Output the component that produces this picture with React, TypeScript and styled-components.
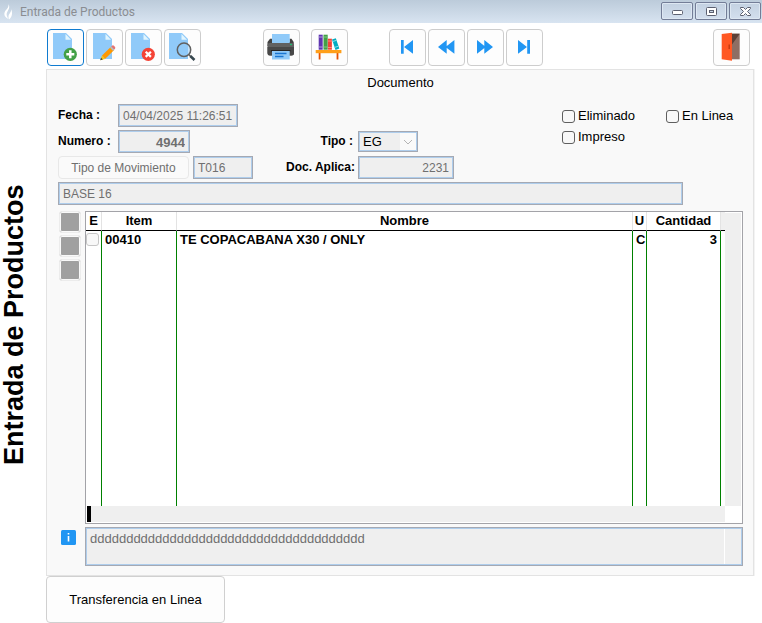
import React from "react";
import styled, { createGlobalStyle, css } from "styled-components";

const Global = createGlobalStyle`
  * { box-sizing: border-box; }
  body {
    margin: 0;
    background: #fff;
    color: #000;
    font: 13px/16px "Liberation Sans", Arial, sans-serif;
  }
  button, input, select, textarea { font: inherit; margin: 0; }
`;

const Window = styled.div`
  display: flex;
  flex-direction: column;
  min-height: 100vh;
`;

const TitleBar = styled.header`
  display: flex;
  align-items: center;
  height: 23px;
  padding: 0 1px 0 4px;
  background: linear-gradient(#bccbda, #d8e4f1);
`;

const WindowTitle = styled.span`
  flex: 1;
  margin-left: 6px;
  padding-top: 1px;
  color: #8a8d92;
  font: 12px/16px Roboto, "Open Sans", sans-serif;
`;

const WindowButton = styled.button`
  display: flex;
  align-items: center;
  justify-content: center;
  width: 32px;
  height: 18px;
  margin: 0 0 1px 2px;
  padding: 0;
  border: 1px solid #737d97;
  border-radius: 2px;
  background: linear-gradient(#c3d1e1, #d3dfee);
  box-shadow: inset 0 0 0 1px #dde7f2;
`;

const Body = styled.main`
  flex: 1;
  display: grid;
  grid-template-columns: 46px minmax(0, 1fr);
  padding-right: 8px;
`;

const SideTitle = styled.h1`
  margin: 0;
  padding-left: 18px;
  padding-bottom: 4px;
  writing-mode: vertical-rl;
  transform: rotate(180deg);
  text-align: center;
  font-size: 27px;
  line-height: 28px;
`;

const Content = styled.div`
  display: flex;
  flex-direction: column;
`;

const Toolbar = styled.div`
  display: flex;
  padding: 6px 4px 3px 1px;
`;

const ToolGroup = styled.div<{ $before?: string }>`
  display: flex;
  gap: 2px;
  margin-left: ${(p) => p.$before ?? "0"};
`;

const ToolButton = styled.button<{ $active?: boolean }>`
  display: grid;
  place-items: center;
  width: 37px;
  height: 37px;
  padding: 0;
  border: 1px solid ${(p) => (p.$active ? "#0f7bd0" : "#cdcdcd")};
  border-radius: 4px;
  background: #fdfdfd;
  svg { margin: -1px; }
`;

const Panel = styled.section`
  flex: 1;
  display: flex;
  flex-direction: column;
  padding: 5px 10px 9px 11px;
  border: 1px solid #e3e3e3;
  background: #f9f9f9;
  box-shadow: 1px 0 0 #f3f3f3;
`;

const PanelTitle = styled.h2`
  margin: 0;
  text-align: center;
  font-size: 13px;
  font-weight: 400;
  line-height: 16px;
`;

const TopArea = styled.div`
  display: flex;
  justify-content: space-between;
  padding-top: 13px;
`;

const Fields = styled.div`
  display: flex;
  flex-direction: column;
  gap: 3px;
`;

const FieldRow = styled.div`
  display: flex;
  align-items: center;
  height: 23px;
`;

const FieldPart = styled.div`
  display: flex;
  align-items: center;
  width: 228px;
`;

const Label = styled.label<{ $end?: boolean }>`
  width: ${(p) => (p.$end ? "67px" : "60px")};
  margin-right: ${(p) => (p.$end ? "5px" : "0")};
  padding-bottom: 2px;
  text-align: ${(p) => (p.$end ? "right" : "left")};
  font-size: 12px;
  font-weight: 700;
  white-space: nowrap;
`;

const boxed = css`
  border: 1px solid #a5a9b3;
  border-radius: 0;
  background-color: #efefef;
  box-shadow: inset 0 0 0 1px #aecdec;
  outline: none;
`;

const TextField = styled.input<{ $width: string; $end?: boolean; $bold?: boolean }>`
  ${boxed}
  width: ${(p) => p.$width};
  height: 23px;
  padding: ${(p) => (p.$bold ? "2px" : "0")} 4px 0;
  color: #6f6f6f;
  font-size: ${(p) => (p.$bold ? "13px" : "12px")};
  font-weight: ${(p) => (p.$bold ? 700 : 400)};
  text-align: ${(p) => (p.$end ? "right" : "left")};
`;

const SelectBox = styled.span`
  ${boxed}
  display: grid;
  grid-template-columns: minmax(0, 1fr) 16px;
  align-items: center;
  width: 60px;
  height: 21px;
  padding: 1px;
  svg { grid-area: 1 / 2; background: #fafafa; pointer-events: none; }
`;

const Select = styled.select`
  grid-area: 1 / 1 / 2 / 3;
  appearance: none;
  border: 0;
  padding: 0 3px;
  background: transparent;
  color: #000;
  outline: none;
`;

const TypeButton = styled.button`
  width: 131px;
  height: 23px;
  margin-right: 4px;
  padding: 0;
  border: 1px solid #e8e8e8;
  border-radius: 4px;
  background: #fafafa;
  color: #6f6f6f;
  font-size: 12px;
`;

const Checks = styled.div`
  display: grid;
  grid-template-columns: 104px auto;
  align-content: start;
  gap: 5px 0;
  width: 181px;
  padding-top: 4px;
`;

const CheckLabel = styled.label`
  display: flex;
  align-items: center;
  gap: 3px;
`;

const Check = styled.input<{ $pale?: boolean }>`
  appearance: none;
  display: block;
  flex: none;
  width: 13px;
  height: 13px;
  border: 1px solid ${(p) => (p.$pale ? "#c6c6c6" : "#5f5f5f")};
  border-radius: 3px;
  background: #f8f8f8;
`;

const Description = styled.div`
  display: flex;
  margin: 3px 60px 6px 0;
`;

const GridArea = styled.div`
  flex: 1;
  display: grid;
  grid-template-columns: 27px minmax(0, 1fr);
  grid-template-rows: 1fr auto;
  row-gap: 3px;
`;

const SideButtons = styled.div`
  display: flex;
  flex-direction: column;
  gap: 2px;
  padding-left: 1px;
`;

const SquareButton = styled.button`
  width: 22px;
  height: 22px;
  padding: 0;
  border: 1px solid #ececec;
  border-radius: 3px;
  background: #a0a0a0;
  box-shadow: inset 0 0 0 1px #f9f9f9;
`;

const DataFrame = styled.div`
  display: grid;
  grid-template-columns: minmax(0, 1fr) 17px;
  grid-template-rows: 1fr 17px;
  border: 1px solid #a3a3a8;
  background: #fff;
`;

const DataTable = styled.table`
  width: 100%;
  height: 100%;
  table-layout: fixed;
  border-spacing: 0;
  font-size: 13px;
  font-weight: 700;
`;

const HeadCell = styled.th`
  height: 19px;
  padding: 0;
  border-right: 1px solid #e3e3e3;
  border-bottom: 1px solid #000;
  line-height: 16px;
  &:last-child { border-right: 0; background: #efefef; }
`;

const Cell = styled.td<{ $end?: boolean }>`
  height: 18px;
  padding: 0 3px;
  border-right: 1px solid #008000;
  text-align: ${(p) => (p.$end ? "right" : "left")};
  vertical-align: top;
  line-height: 18px;
  &:first-child { padding: 2px 0 0; }
  &:last-child { border-right: 0; padding: 0; }
`;

const FillCell = styled(Cell)`
  height: auto;
`;

const VerticalTrack = styled.div`
  margin: 1px 1px 0 0;
  background: #efefef;
`;

const BottomTrack = styled.div`
  display: flex;
  padding: 0 0 1px 1px;
  background: #efefef;
  background-clip: content-box;
  &::before {
    content: "";
    width: 4px;
    background: #000;
  }
`;

const InfoCell = styled.div`
  padding: 2px 0 0 2px;
`;

const NoteBox = styled.div`
  ${boxed}
  display: flex;
  height: 39px;
  padding: 1px;
`;

const Note = styled.textarea`
  flex: 1;
  padding: 2px 3px;
  border: 0;
  border-right: 1px solid #fff;
  background: transparent;
  color: #6f6f6f;
  line-height: 16px;
  resize: none;
  overflow: hidden;
  outline: none;
`;

const NoteTrack = styled.div`
  width: 16px;
`;

const TransferButton = styled.button`
  width: 179px;
  height: 47px;
  border: 1px solid #d0d0d0;
  border-radius: 4px;
  background: #fdfdfd;
  color: #000;
`;

const Icon = ({ children }: { children: React.ReactNode }) => (
  <svg width="37" height="37" viewBox="0 0 37 37" aria-hidden="true">{children}</svg>
);

const Sheet = ({ x }: { x: number }) => (
  <g transform={`translate(${x} 4)`}>
    <path d="M0 0H13L19 6V26H0Z" fill="#90caf9" />
    <path d="M12.5 1L18 6.700H12.500Z" fill="#e1f5fe" />
  </g>
);

const NewIcon = () => (
  <Icon>
    <Sheet x={6} />
    <circle cx="23.300" cy="25.300" r="6.600" fill="#43a047" />
    <path d="M23.300 21.300V29.300M19.300 25.300H27.300" stroke="#fff" strokeWidth="2.500" />
  </Icon>
);

const EditIcon = () => (
  <Icon>
    <Sheet x={7} />
    <path d="M16 26.500L25 17.700L28.200 21L19 30Z" fill="#ff9800" />
    <path d="M25 17.700L26.300 16.500Q27.300 16 28.200 17L29 17.900Q29.700 18.700 29 19.700L27.900 20.800Z" fill="#e57373" />
    <path d="M24 18.700L25.200 17.500L28.400 20.700L27.200 21.900Z" fill="#b0bec5" />
    <path d="M16 26.500L19 30L14.200 31.300Z" fill="#ffc107" />
    <path d="M15.100 28.700L16.800 30.600L14.200 31.300Z" fill="#37474f" />
  </Icon>
);

const DeleteIcon = () => (
  <Icon>
    <Sheet x={6} />
    <circle cx="23.300" cy="25.300" r="6.600" fill="#f44336" />
    <path d="M20.700 22.700L25.900 27.900M25.900 22.700L20.700 27.900" stroke="#fff" strokeWidth="2.200" />
  </Icon>
);

const SearchIcon = () => (
  <Icon>
    <Sheet x={5} />
    <circle cx="20" cy="20.700" r="6.700" fill="#90caf9" fillOpacity=".5" stroke="#616161" strokeWidth="1.500" />
    <path d="M24.700 25.500L27 27.700" stroke="#616161" strokeWidth="1.500" />
    <path d="M26.300 27L30.500 31" stroke="#37474f" strokeWidth="2.600" />
  </Icon>
);

const PrintIcon = () => (
  <Icon>
    <path d="M9 5H26.700V13H9Z" fill="#90caf9" />
    <path d="M7 9.700H9V13H26.700V9.700H28.500L30.700 13V17H4.500V13Z" fill="#424242" />
    <path d="M9 10H26.700V14H9Z" fill="#90caf9" />
    <path d="M6.500 14H29Q31 14 31 16V24Q31 26.500 28.500 26.500H7Q4.500 26.500 4.500 24V16Q4.500 14 6.500 14Z" fill="#616161" />
    <path d="M4.500 18H31V24Q31 26.500 28.500 26.500H7Q4.500 26.500 4.500 24Z" fill="#484848" />
    <circle cx="28" cy="15.500" r=".8" fill="#00e676" />
    <path d="M8 21H27.500V22.500H8Z" fill="#242424" />
    <path d="M9 22H26.700V30.500H9Z" fill="#90caf9" />
    <path d="M12 24.500H23.500M12 27.500H20.500" stroke="#1976d2" strokeWidth="1.300" />
  </Icon>
);

const ShelfIcon = () => (
  <Icon>
    <path d="M7.700 5.700H11.700V20.700H7.700Z" fill="#5e35b1" />
    <path d="M12.500 5.700H16.700V20.700H12.500Z" fill="#43a047" />
    <path d="M16.900 9.700H20.900V20.700H16.900Z" fill="#f44336" />
    <path d="M21 10.500L24.800 9.300L28.300 19.600L24.500 20.900Z" fill="#00acc1" />
    <path d="M7.700 8H11.700M7.700 18H11.700" stroke="#b39ddb" />
    <path d="M12.500 8H16.700M12.500 18H16.700" stroke="#81c784" />
    <path d="M16.900 12H20.900M16.900 18.500H20.900" stroke="#ff8a80" />
    <path d="M21.700 12.500L25.500 11.300M23.600 18.400L27.400 17.200" stroke="#80deea" />
    <path d="M7.700 23H9.500V30.500H7.700ZM25.600 23H27.400V30.500H25.600Z" fill="#e65100" />
    <path d="M4.700 21H30.400V24.200H4.700Z" fill="#ff9f1a" />
  </Icon>
);

const NavIcon = ({ d }: { d: string }) => (
  <Icon><path d={d} fill="#2196f3" /></Icon>
);

const ExitIcon = () => (
  <Icon>
    <path d="M19 4.700H26.700V30.300H19Z" fill="#8d6e63" />
    <path d="M19 4.700H26.700L19 15.500Z" fill="#5d4037" />
    <path d="M8.700 5L19 3.700V31.700L8.700 30.200Z" fill="#ff5722" />
    <path d="M16.200 15.500V20" stroke="#bf360c" strokeWidth="1.300" />
  </Icon>
);

const navItems = [
  { label: "Primero", d: "M12 11H14.700V24.800H12ZM15 17.900L24 11V24.800Z" },
  { label: "Anterior", d: "M10 17.900L18.700 11V24.800ZM17.500 17.900L26.400 11V24.800Z" },
  { label: "Siguiente", d: "M10 11L18.700 17.900L10 24.800ZM17.300 11L26 17.900L17.300 24.800Z" },
  { label: "Último", d: "M12 11L21 17.900L12 24.800ZM21.200 11H24V24.800H21.200Z" },
];

const columns = [
  { title: "E", width: 16 },
  { title: "Item", width: 75 },
  { title: "Nombre" },
  { title: "U", width: 14 },
  { title: "Cantidad", width: 74 },
  { title: "", width: 4 },
];

export default function App() {
  return (
    <Window>
      <Global />
      <TitleBar>
        <svg width="10" height="16" viewBox="0 0 10 16" aria-hidden="true">
          <path d="M4.500 0C6 3 5 5 3.500 7.500C2 10 2.500 12 4.500 15C1 13.500-.5 11 .8 8C2 5.500 5 4 4.500 0ZM7 5C9 9 8 13 5 15.500C4 12.500 4.500 11 6 9C7 7.700 7.300 6.500 7 5Z" fill="#fff" />
        </svg>
        <WindowTitle>Entrada de Productos</WindowTitle>
        <WindowButton aria-label="Minimizar">
          <svg width="13" height="13" viewBox="0 0 13 13"><rect x="1.500" y="5.500" width="10" height="4" rx="1" fill="#fff" stroke="#5c6070" /></svg>
        </WindowButton>
        <WindowButton aria-label="Maximizar">
          <svg width="13" height="13" viewBox="0 0 13 13"><rect x="1.500" y="2.500" width="10" height="8" rx="1" fill="#fff" stroke="#5c6070" /><rect x="4.500" y="5.500" width="4" height="2" fill="#c8d5e4" stroke="#5c6070" /></svg>
        </WindowButton>
        <WindowButton aria-label="Cerrar">
          <svg width="13" height="13" viewBox="0 0 13 13"><path d="M1.500 2.500H4.500L6.500 4.500L8.500 2.500H11.500V3.500L8.500 6.500L11.500 9.500V10.500H8.500L6.500 8.500L4.500 10.500H1.500V9.500L4.500 6.500L1.500 3.500Z" fill="#fff" stroke="#5c6070" /></svg>
        </WindowButton>
      </TitleBar>

      <Body>
        <SideTitle>Entrada de Productos</SideTitle>
        <Content>
          <Toolbar>
            <ToolGroup>
              <ToolButton $active aria-label="Nuevo"><NewIcon /></ToolButton>
              <ToolButton aria-label="Editar"><EditIcon /></ToolButton>
              <ToolButton aria-label="Eliminar"><DeleteIcon /></ToolButton>
              <ToolButton aria-label="Buscar"><SearchIcon /></ToolButton>
            </ToolGroup>
            <ToolGroup $before="62px">
              <ToolButton aria-label="Imprimir"><PrintIcon /></ToolButton>
            </ToolGroup>
            <ToolGroup $before="11px">
              <ToolButton aria-label="Catálogo"><ShelfIcon /></ToolButton>
            </ToolGroup>
            <ToolGroup $before="41px">
              {navItems.map((n) => (
                <ToolButton key={n.label} aria-label={n.label}><NavIcon d={n.d} /></ToolButton>
              ))}
            </ToolGroup>
            <ToolGroup $before="auto">
              <ToolButton aria-label="Salir"><ExitIcon /></ToolButton>
            </ToolGroup>
          </Toolbar>

          <Panel>
            <PanelTitle>Documento</PanelTitle>
            <TopArea>
              <Fields>
                <FieldRow>
                  <Label htmlFor="fecha">Fecha :</Label>
                  <TextField id="fecha" $width="120px" readOnly value="04/04/2025 11:26:51" />
                </FieldRow>
                <FieldRow>
                  <FieldPart>
                    <Label htmlFor="numero">Numero :</Label>
                    <TextField id="numero" $width="72px" $end $bold readOnly value="4944" />
                  </FieldPart>
                  <Label htmlFor="tipo" $end>Tipo :</Label>
                  <SelectBox>
                    <Select id="tipo" defaultValue="EG"><option>EG</option></Select>
                    <svg width="16" height="17" viewBox="0 0 16 17" aria-hidden="true">
                      <path d="M4 7L8 11L12 7" fill="none" stroke="#b5b5b5" />
                    </svg>
                  </SelectBox>
                </FieldRow>
                <FieldRow>
                  <FieldPart>
                    <TypeButton>Tipo de Movimiento</TypeButton>
                    <TextField aria-label="Tipo de Movimiento" $width="60px" readOnly value="T016" />
                  </FieldPart>
                  <Label htmlFor="aplica" $end>Doc. Aplica:</Label>
                  <TextField id="aplica" $width="96px" $end readOnly value="2231" />
                </FieldRow>
              </Fields>
              <Checks>
                <CheckLabel><Check type="checkbox" />Eliminado</CheckLabel>
                <CheckLabel><Check type="checkbox" />En Linea</CheckLabel>
                <CheckLabel><Check type="checkbox" />Impreso</CheckLabel>
              </Checks>
            </TopArea>
            <Description>
              <TextField aria-label="Descripción" $width="100%" readOnly value="BASE 16" />
            </Description>

            <GridArea>
              <SideButtons>
                <SquareButton aria-label="Agregar línea" />
                <SquareButton aria-label="Editar línea" />
                <SquareButton aria-label="Quitar línea" />
              </SideButtons>
              <DataFrame>
                <DataTable>
                  <colgroup>
                    {columns.map((c, i) => <col key={i} width={c.width} />)}
                  </colgroup>
                  <thead>
                    <tr>
                      {columns.map((c, i) => <HeadCell key={i}>{c.title}</HeadCell>)}
                    </tr>
                  </thead>
                  <tbody>
                    <tr>
                      <Cell><Check type="checkbox" $pale aria-label="00410" /></Cell>
                      <Cell>00410</Cell>
                      <Cell>TE COPACABANA X30 / ONLY</Cell>
                      <Cell>C</Cell>
                      <Cell $end>3</Cell>
                      <Cell />
                    </tr>
                    <tr aria-hidden="true">
                      {columns.map((_, i) => <FillCell key={i} />)}
                    </tr>
                  </tbody>
                </DataTable>
                <VerticalTrack />
                <BottomTrack />
              </DataFrame>
              <InfoCell>
                <svg width="17" height="17" viewBox="0 0 17 17" role="img" aria-label="Información">
                  <rect x="1" y="1" width="15" height="15" rx="1.500" fill="#2196f3" />
                  <path d="M7.700 4H9.300V5.600H7.700ZM7.700 7H9.300V12.500H7.700Z" fill="#fff" />
                </svg>
              </InfoCell>
              <NoteBox>
                <Note aria-label="Observaciones" readOnly value={"d".repeat(38)} />
                <NoteTrack />
              </NoteBox>
            </GridArea>
          </Panel>
          <TransferButton>Transferencia en Linea</TransferButton>
        </Content>
      </Body>
    </Window>
  );
}
